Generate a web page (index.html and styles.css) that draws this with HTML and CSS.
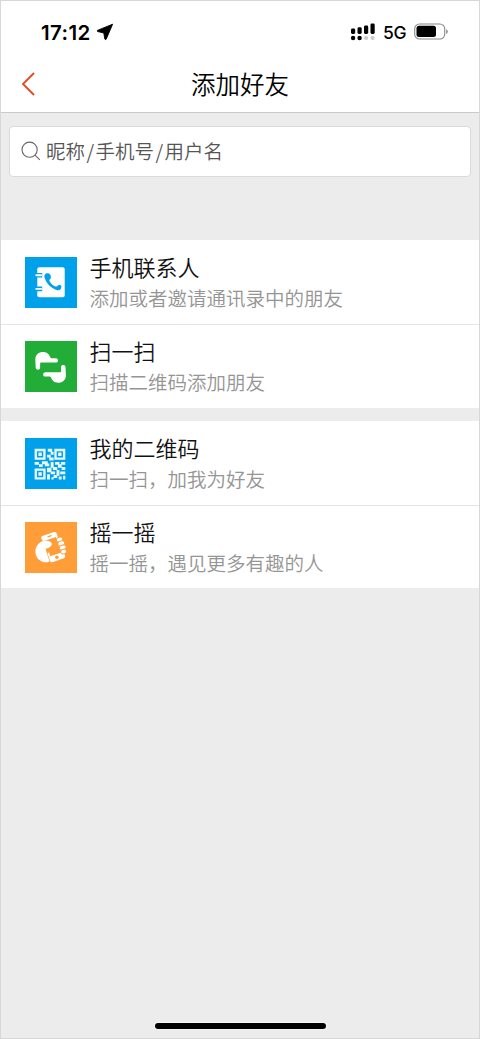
FILE: index.html
```html
<!DOCTYPE html>
<html lang="zh-CN">
<head>
<meta charset="utf-8">
<title>添加好友</title>
<link rel="stylesheet" href="styles.css">
</head>
<body>
<div class="screen">
  <header class="top">
    <div class="status">
      <span class="clock">17:12</span>
      <svg class="arrow" width="18" height="18" viewBox="0 0 18 18"><path d="M16.6 1.2 L1.4 7.4 Q.6 8 1.6 8.5 L7.8 10 L8.8 16 Q9.4 17.2 10.2 16.2 Z" stroke="#000" stroke-linejoin="round" stroke-width=".9"/></svg>
      <svg class="signal" width="26" height="18" viewBox="0 0 26 18">
        <rect x="1" y="5.5" width="4.2" height="5.5" rx="1.4"/><rect x="7.5" y="4.3" width="4.2" height="6.7" rx="1.4"/><rect x="14" y="2.5" width="4.2" height="8.5" rx="1.4"/><rect x="20.5" y=".5" width="4.2" height="10.5" rx="1.4"/>
        <circle cx="3.1" cy="15" r="2.2"/><circle cx="9.6" cy="15" r="2.2"/><circle cx="16.1" cy="15" r="2.1" fill="#ccc"/><circle cx="22.6" cy="15" r="2.1" fill="#ccc"/>
      </svg>
      <span class="net">5G</span>
      <svg class="battery" width="35" height="18" viewBox="0 0 35 18"><rect x=".7" y="1" width="30" height="15" rx="4.8" fill="none" stroke="#888" stroke-width="1.1"/><rect x="2.5" y="2.8" width="19.5" height="11.3" rx="2.5"/><path d="M32.2 6v5q1.6-1 1.6-2.5T32.2 6" fill="#888"/></svg>
    </div>
    <div class="nav">
      <svg class="back" width="14" height="24" viewBox="0 0 14 24"><path d="M13 1 2 12l11 11" fill="none" stroke="#e6481f" stroke-width="1.8"/></svg>
      <h1 class="heading">添加好友</h1>
    </div>
  </header>
  <div class="search">
    <svg width="20" height="20" viewBox="0 0 20 20" fill="none" stroke="#666" stroke-width="1.1"><circle cx="8.6" cy="8.7" r="7.6"/><path d="m14 14.2 4.8 4.7"/></svg>
    <span class="hint">昵称<i class="slash">/</i>手机号<i class="slash">/</i>用户名</span>
  </div>
  <main>
    <section class="group">
      <div class="row">
        <svg class="icon blue" viewBox="0 0 52 52"><path fill="#fff" d="M14 10.500h24q2 0 2 2v26.500q0 2-2 2H14q-2 0-2-2V12.500q0-2 2-2z"/><path stroke="#00a0ea" stroke-width="4.600" d="M11.500 18.500h5.500M11.500 32.500h5.500"/><path stroke="#fff" stroke-width="2" stroke-linecap="round" d="M11 18.500h5M11 32.500h5"/><path fill="#00a0ea" d="M23 16.500c-3-.2-4.300 2-3.400 5 1.700 6 8 11.900 13.400 12.300 2.500.1 4-2 3.500-4.100-.4-1.300-1.800-1.500-3-.9-1.400.7-1.400 1.600-2.500 1.300-2.800-.8-6-3.800-6.700-6.200-.2-1 1.400-1.300 1.600-2.900.2-1.700-.6-4.200-2.900-4.500z"/></svg>
        <div class="text"><div class="title">手机联系人</div><div class="sub">添加或者邀请通讯录中的朋友</div></div>
      </div>
      <div class="row">
        <svg class="icon green" viewBox="0 0 52 52"><path id="hand" fill="#fff" d="M10 19c0-5 3.500-7.700 8-7.700 4 0 5.900 2.200 7 4.800.5 1.200 1.200 1.500 2.500 1.500h3.500c2.900 0 2.900 4.400 0 4.400H16.500c-1.200 0-1.600.5-1.600 1.500v3.700c0 2.700-4.200 2.700-4.500 0z"/><use href="#hand" transform="rotate(180 25.600 26.900)"/></svg>
        <div class="text"><div class="title">扫一扫</div><div class="sub">扫描二维码添加朋友</div></div>
      </div>
    </section>
    <section class="group second">
      <div class="row">
        <svg class="icon blue" viewBox="0 0 52 52"><g transform="translate(9.3 11) scale(1.49)" fill="#e9faff"><path fill-rule="evenodd" d="M0 0h7.500v7.500H0zM1.600 1.600v4.300h4.300V1.600zM13.500 0H21v7.500h-7.500zM15.100 1.600v4.300h4.300V1.600zM0 13.500h7.500V21H0zM1.600 15.100v4.300h4.300v-4.300z"/><path d="M2.600 2.600h2.300v2.300H2.600zM16.100 2.600h2.300v2.300h-2.300zM2.600 16.100h2.300v2.300H2.600zM9 0h3v2H9zM11 2h2v2h-2zM8.500 4h2.500v2H8.500zM10 6h3v2h-3zM0 9h3v2H0zM3 10.500h2.500v2H3zM5 8.500h4v2H5zM7 10h3v2H7zM11 9h2v4h-2zM8.500 13h3v3h-3zM14 9h3v2h-3zM18 9h3v2h-3zM16 10.500h2.500v2.500H16zM12.500 12.500h3v2h-3zM11 15.500h3v2h-3zM15 14.500h2v4h-2zM18.500 12.500H21v2h-2.500zM17.500 15.500H21v2h-3.500zM13 18h2.500v2H13zM8.500 17.500h2V21h-2zM11.500 19.500H13V21h-1.500zM16.500 19h2v2h-2zM19.500 18.500H21V21h-1.500z"/></g></svg>
        <div class="text"><div class="title">我的二维码</div><div class="sub">扫一扫，加我为好友</div></div>
      </div>
      <div class="row">
        <svg class="icon orange" viewBox="0 0 52 52"><path fill="#fff" d="M15.500 20.500C12 23 9.500 27 10.200 31.500 11 37.500 16 41.500 22.500 41L24.500 40.300 20.500 27.500C24 26.300 26.800 25 26.800 22.500 26.500 18.500 19 18.500 15.500 20.500z"/><path fill="#fff" fill-rule="evenodd" d="M17.200 14.200 29 10.300Q31 9.800 31.800 11.700L40.300 34.200Q41 36.300 39 37L27.500 41Q25.600 41.500 24.900 39.600L22.400 31.500 23.900 31 25.300 35 36.700 31.100 31 15.300 19.200 19.300 17.900 19.700 16 16.500Q15.600 14.800 17.200 14.200z"/><path stroke="#ff9d38" stroke-width="1.2" d="m22.500 15.200 4.200-1.400"/><circle cx="32" cy="36" r="1.800" fill="#ff9d38"/><g stroke="#ff9d38" stroke-width=".9" fill="#fff"><rect x="31.500" y="15.500" width="6.500" height="4.600" rx="2.300" transform="rotate(-18 35 18)"/><rect x="33" y="19.600" width="7" height="4.600" rx="2.300" transform="rotate(-18 36 22)"/><rect x="34.500" y="23.700" width="7" height="4.600" rx="2.300" transform="rotate(-18 38 26)"/><rect x="35.800" y="27.800" width="6" height="4.600" rx="2.300" transform="rotate(-18 39 30)"/></g></svg>
        <div class="text"><div class="title">摇一摇</div><div class="sub">摇一摇，遇见更多有趣的人</div></div>
      </div>
    </section>
  </main>
  <div class="home"></div>
</div>
</body>
</html>
```
FILE: styles.css
```css
* { box-sizing: border-box; }
body { margin: 0; font-family: "Noto Sans CJK SC", sans-serif; }
.screen {
  height: 1039px;
  border: 1px solid #d9d6d7;
  background: #ececec;
  display: flex;
  flex-direction: column;
}
.top { height: 112px; background: #fff; border-bottom: 1px solid #cacaca; }
.status { height: 56px; padding: 6px 30px 0 40px; display: flex; align-items: center; font-family: Inter, sans-serif; }
.clock { width: 51px; font-size: 20.5px; font-weight: 600; letter-spacing: .4px; }
.arrow { margin-left: 4px; }
.signal { margin-left: auto; }
.net { margin-left: 7px; width: 31px; font-size: 17.5px; font-weight: 500; letter-spacing: -.3px; }
.battery { flex: none; }
.nav { height: 53px; padding-left: 20px; display: grid; grid-template-columns: 14px 1fr 34px; align-items: center; }
.heading { margin: 0; text-align: center; font-size: 24.5px; line-height: 36px; font-weight: 350; color: #000; }
.search {
  flex: none;
  height: 51px;
  margin: 13px 8px 63px;
  padding: 0 0 1px 11px;
  background: #fff;
  border: 1px solid #dadada;
  border-radius: 4px;
  display: flex;
  align-items: center;
}
.hint { margin-left: 5px; font-size: 19.5px; line-height: 28px; font-weight: 350; color: #555; white-space: nowrap; }
.slash { display: inline-block; width: 10.5px; text-align: center; font-style: normal; }
.group { background: #fff; }
.second { margin-top: 13px; }
.row { height: 84px; padding-left: 24px; display: flex; align-items: center; }
.row + .row { border-top: 1px solid #e5e5e5; }
.second .row + .row { height: 83px; }
.icon { flex: none; width: 52px; height: 51px; }
.blue { background: #00a0ea; }
.green { background: #22ac38; }
.orange { background: #ff9d38; }
.text { margin: -1px 0 0 12.5px; white-space: nowrap; }
.title { font-size: 22px; line-height: 31px; font-weight: 350; color: #111; }
.sub { font-size: 19.5px; line-height: 31px; font-weight: 350; color: #959595; }
.home { width: 171px; height: 6px; margin: auto auto 9px; border-radius: 3px; background: #000; box-shadow: 0 0 0 1px #f5f5f5; }
```
